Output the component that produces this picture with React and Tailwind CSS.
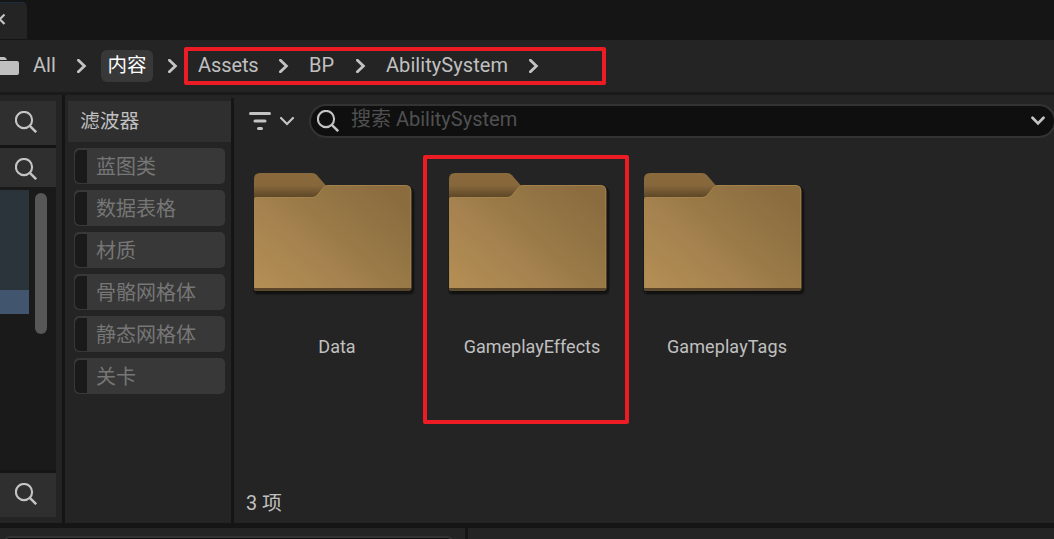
import React from "react";

function Search({ className = "" }) {
  return (
    <svg viewBox="0 0 22 22" className={`h-[22px] w-[22px] shrink-0 ${className}`} fill="none" stroke="#c4c4c4">
      <circle cx="9" cy="9" r="8.1" strokeWidth="2.1" />
      <path d="M14.8 14.8 21.2 21.2" strokeWidth="2.5" />
    </svg>
  );
}

function Arrow({ className = "" }) {
  return (
    <svg viewBox="0 0 10 14" className={`h-[14px] w-[10px] shrink-0 ${className}`} fill="none" stroke="#c4c4c4" strokeWidth="2.8">
      <path d="M1.4 1.2 7.4 7 1.4 12.8" strokeLinecap="round" />
    </svg>
  );
}

const filters = ["蓝图类", "数据表格", "材质", "骨骼网格体", "静态网格体", "关卡"];

function Folder() {
  return (
    <svg viewBox="0 0 164 126" className="block h-[126px] w-[164px] overflow-visible">
      <defs>
        <linearGradient id="front" gradientUnits="userSpaceOnUse" x1="0" y1="118" x2="108" y2="-6">
          <stop offset="0" stopColor="#b59055" />
          <stop offset="0.44" stopColor="#a4814e" />
          <stop offset="0.58" stopColor="#9a7b48" />
          <stop offset="1" stopColor="#8a6c3f" />
        </linearGradient>
        <linearGradient id="back" x1="0" y1="0" x2="0" y2="1">
          <stop offset="0" stopColor="#8a6a3d" />
          <stop offset="0.5" stopColor="#86673b" />
          <stop offset="1" stopColor="#5a4526" />
        </linearGradient>
        <filter id="soft" x="-10%" y="-10%" width="120%" height="120%">
          <feGaussianBlur stdDeviation="0.8" />
        </filter>
      </defs>
      <path d="M1 24H60L72 15H154Q159.4 15 159.4 20V118Q159 120.6 156 120.6H3Q.5 120.6 .5 118Z" fill="#080808" filter="url(#soft)" />
      <path d="M0 6Q0 0 6 0H58Q61 0 63 2.2L71.5 12 62 25H0Z" fill="url(#back)" />
      <path d="M0 26Q0 24 2 24H58.5Q61.5 24 63.5 21.5L69.5 14Q71 12 73.5 12H151Q157.3 12 157.3 18V116Q157.3 117.6 155 117.6H2Q0 117.6 0 116Z" fill="url(#front)" />
      <path d="M.5 115V26.5Q.5 24.5 2.5 24.5H58.5Q61.5 24.5 64 21.5L69.5 14.5Q71.5 12.5 73.5 12.5H151Q156.8 12.5 156.8 18V115" fill="none" stroke="#aa854e" strokeOpacity=".75" />
      <path d="M0 115H157.3V115.8Q157 117.6 155 117.6H2Q0 117.6 0 115.8Z" fill="#59462a" />
    </svg>
  );
}

function FolderTile({ name, spacing, marked }) {
  return (
    <div className="relative h-[272px] w-[195px] shrink-0">
      <div className="pt-[20px] pl-[17px]"><Folder /></div>
      <div className={`mt-[37px] w-[200px] text-center text-[18px] leading-[22px] text-[#c0c0c0] ${spacing}`}>{name}</div>
      {marked && <div className="absolute top-[2px] -left-[9px] h-[269px] w-[206px] rounded-[2px] border-4 border-[#ed1c24]" />}
    </div>
  );
}

export default function App() {
  return (
    <div className="flex h-[539px] w-[1054px] flex-col overflow-hidden bg-[#151515] font-['Roboto','Noto_Sans_CJK_SC',sans-serif] text-[20px] text-[#c0c0c0]">
      <div className="flex h-[40px] shrink-0 pt-[2px]">
        <div className="h-[37px] w-[27px] rounded-tr-[5px] border-t border-[#1d2d3d] bg-[#242424]">
          <svg viewBox="0 0 27 36" className="h-[36px] w-[27px]" fill="none" stroke="#c4c4c4" strokeWidth="2.2">
            <path d="M-5 11.5 4.5 21M4.5 11.5-5 21" />
          </svg>
        </div>
      </div>

      <nav className="relative flex h-[52px] shrink-0 items-center bg-[#242424] leading-[28px] whitespace-nowrap">
        <svg viewBox="0 0 19 18" className="h-[18px] w-[19px] shrink-0" fill="#c0c0c0">
          <path d="M-4 0H4Q6 0 7 3H0V4H17Q19 4 19 6V16Q19 18 17 18H-4Z" />
        </svg>
        <span className="ml-[14px] w-[44px] -translate-y-px">All</span>
        <Arrow />
        <span className="ml-[14px] flex h-[32px] w-[52px] items-center justify-center rounded-[6px] bg-[#383838] text-[19.5px] text-white">内容</span>
        <Arrow className="ml-[15px]" />
        <span className="ml-[20px] w-[81px] -translate-y-px tracking-[-0.1px]">Assets</span>
        <Arrow />
        <span className="ml-[20px] w-[47px] -translate-y-px">BP</span>
        <Arrow />
        <span className="ml-[20px] w-[143px] -translate-y-px tracking-[0.06px]">AbilitySystem</span>
        <Arrow />
        <div className="absolute top-[7px] left-[184px] h-[38px] w-[422px] rounded-[2px] border-4 border-[#ed1c24]" />
      </nav>
      <div className="h-[3px] shrink-0 bg-[#1a1a1a]" />

      <main className="flex h-[428px] shrink-0 bg-[#242424]">
        <aside className="flex w-[56px] shrink-0 flex-col pt-[6px]">
          <div className="h-[44px] bg-[#2f2f2f] pt-[10px] pl-[15px]"><Search /></div>
          <div className="h-[3px] bg-[#151515]" />
          <div className="h-[39px] bg-[#2f2f2f] pt-[10px] pl-[15px]"><Search /></div>
          <div className="flex h-[283px] bg-[#1a1a1a] pt-[3px]">
            <div className="w-[29px]">
              <div className="h-[100px] bg-[#2b333b]" />
              <div className="h-[24px] bg-[#41566e]" />
            </div>
            <div className="mt-[3px] ml-[6px] h-[141px] w-[12px] rounded-full bg-[#575757]" />
          </div>
          <div className="h-[3px] bg-[#151515]" />
          <div className="h-[44px] bg-[#2f2f2f] pt-[10px] pl-[15px]"><Search /></div>
        </aside>
        <div className="ml-[6px] w-[3px] shrink-0 bg-[#151515]" />

        <section className="w-[166px] shrink-0 pt-[6px] pl-[3px]">
          <div className="h-[41px] bg-[#2f2f2f] pl-[12px] text-[19.8px] leading-[41px]">滤波器</div>
          <div className="mt-[6px] ml-[6px] flex w-[151px] flex-col gap-[6px]">
            {filters.map((name) => (
              <div key={name} className="flex h-[36px] items-center rounded-[5px] bg-[#383838] pl-px text-[20px] text-[#767676]">
                <div className="h-[33px] w-[12px] rounded-l-[5px] bg-[#1a1a1a]" />
                <span className="ml-[9px] translate-y-px leading-[34px]">{name}</span>
              </div>
            ))}
          </div>
        </section>
        <div className="mt-[3px] w-[3px] shrink-0 bg-[#151515]" />

        <section className="flex w-[820px] shrink-0 flex-col pt-[9px]">
          <div className="flex h-[34px] shrink-0 items-center pl-[14px]">
            <svg viewBox="0 0 24 20" className="h-[20px] w-[24px] shrink-0" stroke="#c4c4c4" strokeWidth="3" strokeLinecap="round">
              <path d="M2.5 2.5H21.5M7 10H17M10.5 17.5H13.5" />
            </svg>
            <svg viewBox="0 0 16 10" className="ml-[7px] h-[10px] w-[16px] shrink-0" fill="none" stroke="#c4c4c4" strokeWidth="2.2" strokeLinecap="round">
              <path d="M2 2 8 8 14 2" />
            </svg>
            <div className="ml-[14px] flex h-[34px] w-[747px] shrink-0 items-center rounded-full border-2 border-[#333333] bg-[#0f0f0f]">
              <Search className="ml-[6px]" />
              <span className="ml-[12px] -translate-y-[2px] text-[#505050]">搜索 AbilitySystem</span>
              <svg viewBox="0 0 14 10" className="mr-[9px] ml-auto h-[10px] w-[14px] shrink-0" fill="none" stroke="#c4c4c4" strokeWidth="2.7" strokeLinecap="round">
                <path d="M1.5 1.8 7 7.4 12.5 1.8" />
              </svg>
            </div>
          </div>
          <div className="mt-[15px] flex h-[272px] shrink-0 pl-[3px]">
            <FolderTile name="Data" spacing="" />
            <FolderTile name="GameplayEffects" spacing="" marked />
            <FolderTile name="GameplayTags" spacing="tracking-[0.1px]" />
          </div>
          <div className="mt-[65px] ml-[12px] text-[19.8px] leading-[28px]">3 项</div>
        </section>
      </main>
      <div className="h-[5px] shrink-0 bg-[#151515]" />

      <footer className="flex h-[11px] shrink-0 gap-[3px]">
        <div className="w-[465px] bg-[#242424] pt-[8px] pl-[4px]">
          <div className="h-[20px] w-[449px] rounded-[6px] border-2 border-[#333333] bg-[#0f0f0f]" />
        </div>
        <div className="flex-1 bg-[#242424]" />
      </footer>
    </div>
  );
}
